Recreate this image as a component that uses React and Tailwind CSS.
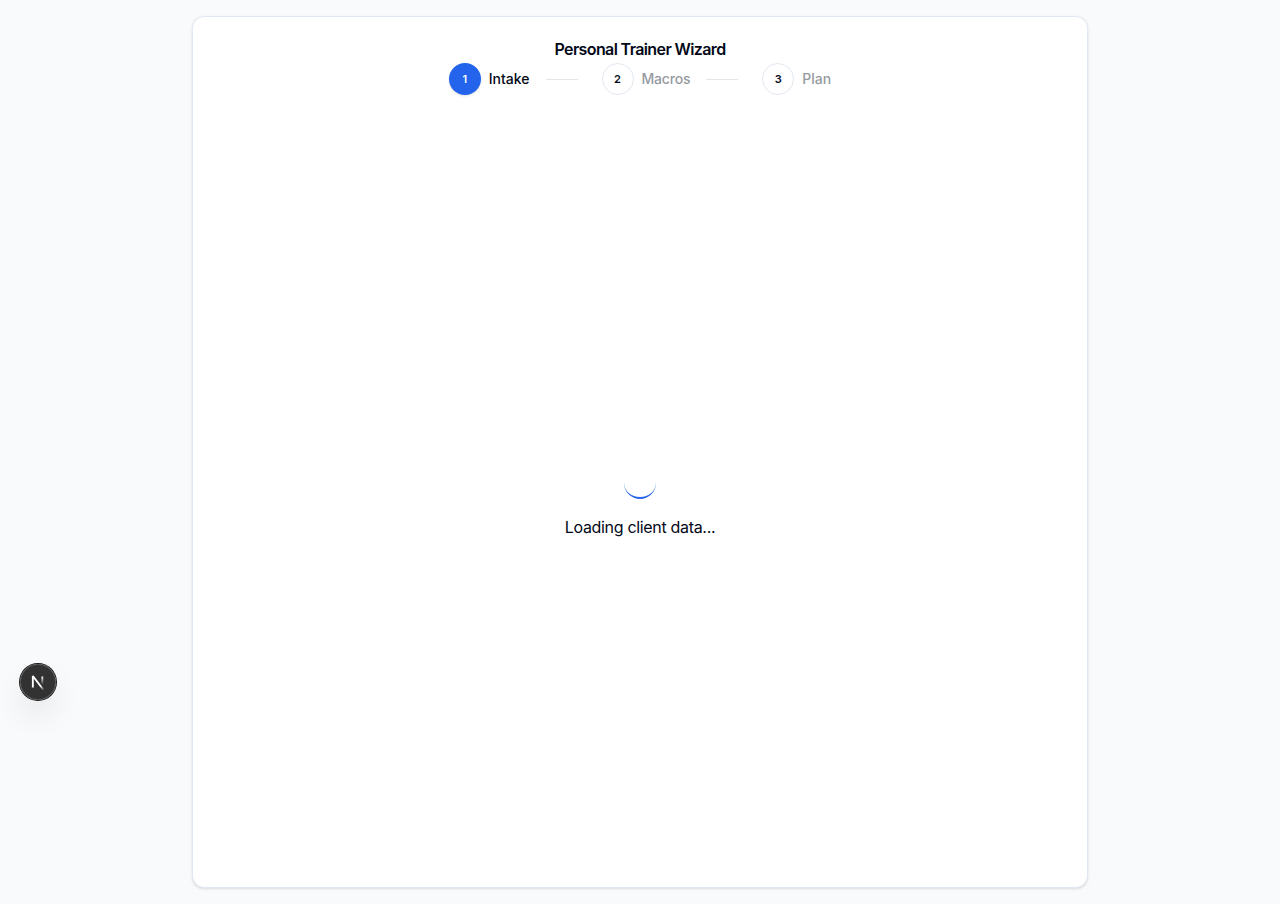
import React from "react";

const steps = [
  { id: 1, label: "Intake", tracking: "tracking-normal" },
  { id: 2, label: "Macros", tracking: "tracking-[-0.2px]" },
  { id: 3, label: "Plan", tracking: "tracking-normal" },
];

function Stepper({ current }) {
  return (
    <div className="flex items-center justify-center gap-6">
      {steps.map((step, index) => (
        <div key={step.id} className="flex items-center gap-4">
          <div className="flex items-center gap-2">
            <div
              className={
                step.id === current
                  ? "flex size-8 items-center justify-center rounded-full bg-[#2463eb] text-[11px] font-semibold text-slate-50 shadow-sm"
                  : "flex size-8 items-center justify-center rounded-full border border-slate-200 bg-white text-[11px] font-semibold text-[#020817]"
              }
            >
              {step.id}
            </div>
            <span
              className={`text-sm ${step.tracking} ${
                step.id === current
                  ? "font-medium text-[#020817]"
                  : "font-[450] text-[#969a9f]"
              }`}
            >
              {step.label}
            </span>
          </div>
          {index < steps.length - 1 && <div className="h-px w-8 bg-[#e2e5ea]" />}
        </div>
      ))}
    </div>
  );
}

function DevIndicator() {
  return (
    <button
      aria-label="Open developer tools"
      className="fixed left-5 top-[664px] flex size-9 items-center justify-center rounded-full bg-black/80 shadow-[0_0_0_1px_#171717,inset_0_0_0_1px_rgba(255,255,255,0.14),0_16px_32px_-8px_rgba(0,0,0,0.24)]"
    >
      <svg className="shrink-0" width="40" height="40" viewBox="0 0 40 40" fill="none">
        <defs>
          <linearGradient id="diagonal" x1="9.95555" y1="11.1226" x2="15.4778" y2="17.9671" gradientUnits="userSpaceOnUse">
            <stop stopColor="white" />
            <stop offset="0.604072" stopColor="white" stopOpacity="0" />
            <stop offset="1" stopColor="white" stopOpacity="0" />
          </linearGradient>
          <linearGradient id="stem" x1="11.8222" y1="1.40039" x2="11.791" y2="9.62542" gradientUnits="userSpaceOnUse">
            <stop stopColor="white" />
            <stop offset="1" stopColor="white" stopOpacity="0" />
          </linearGradient>
        </defs>
        <g transform="translate(12.5 13)">
          <path d="M13.3 15.2 L2.34 1 V12.6" stroke="url(#diagonal)" strokeWidth="1.86" strokeLinejoin="bevel" />
          <path d="M11.825 1.5 V13.1" stroke="url(#stem)" strokeWidth="1.86" />
        </g>
      </svg>
    </button>
  );
}

export default function App() {
  return (
    <div className="h-screen bg-[#f9fafc] p-4 font-['Inter',sans-serif] text-[#020817]">
      <div className="mx-auto flex h-[872px] max-w-4xl flex-col rounded-xl border border-slate-200 bg-white shadow-sm">
        <header className="flex flex-col gap-1.5 p-6 pb-0">
          <h1 className="text-center text-base leading-none font-semibold tracking-[-0.62px]">
            Personal Trainer Wizard
          </h1>
          <Stepper current={1} />
        </header>
        <main className="flex flex-1 items-center justify-center pt-[23px]">
          <div className="text-center">
            <div className="mx-auto mb-4 size-8 rounded-full border-b-2 border-[#2463eb]" />
            <p className="tracking-[-0.32px]">Loading client data...</p>
          </div>
        </main>
      </div>
      <DevIndicator />
    </div>
  );
}
